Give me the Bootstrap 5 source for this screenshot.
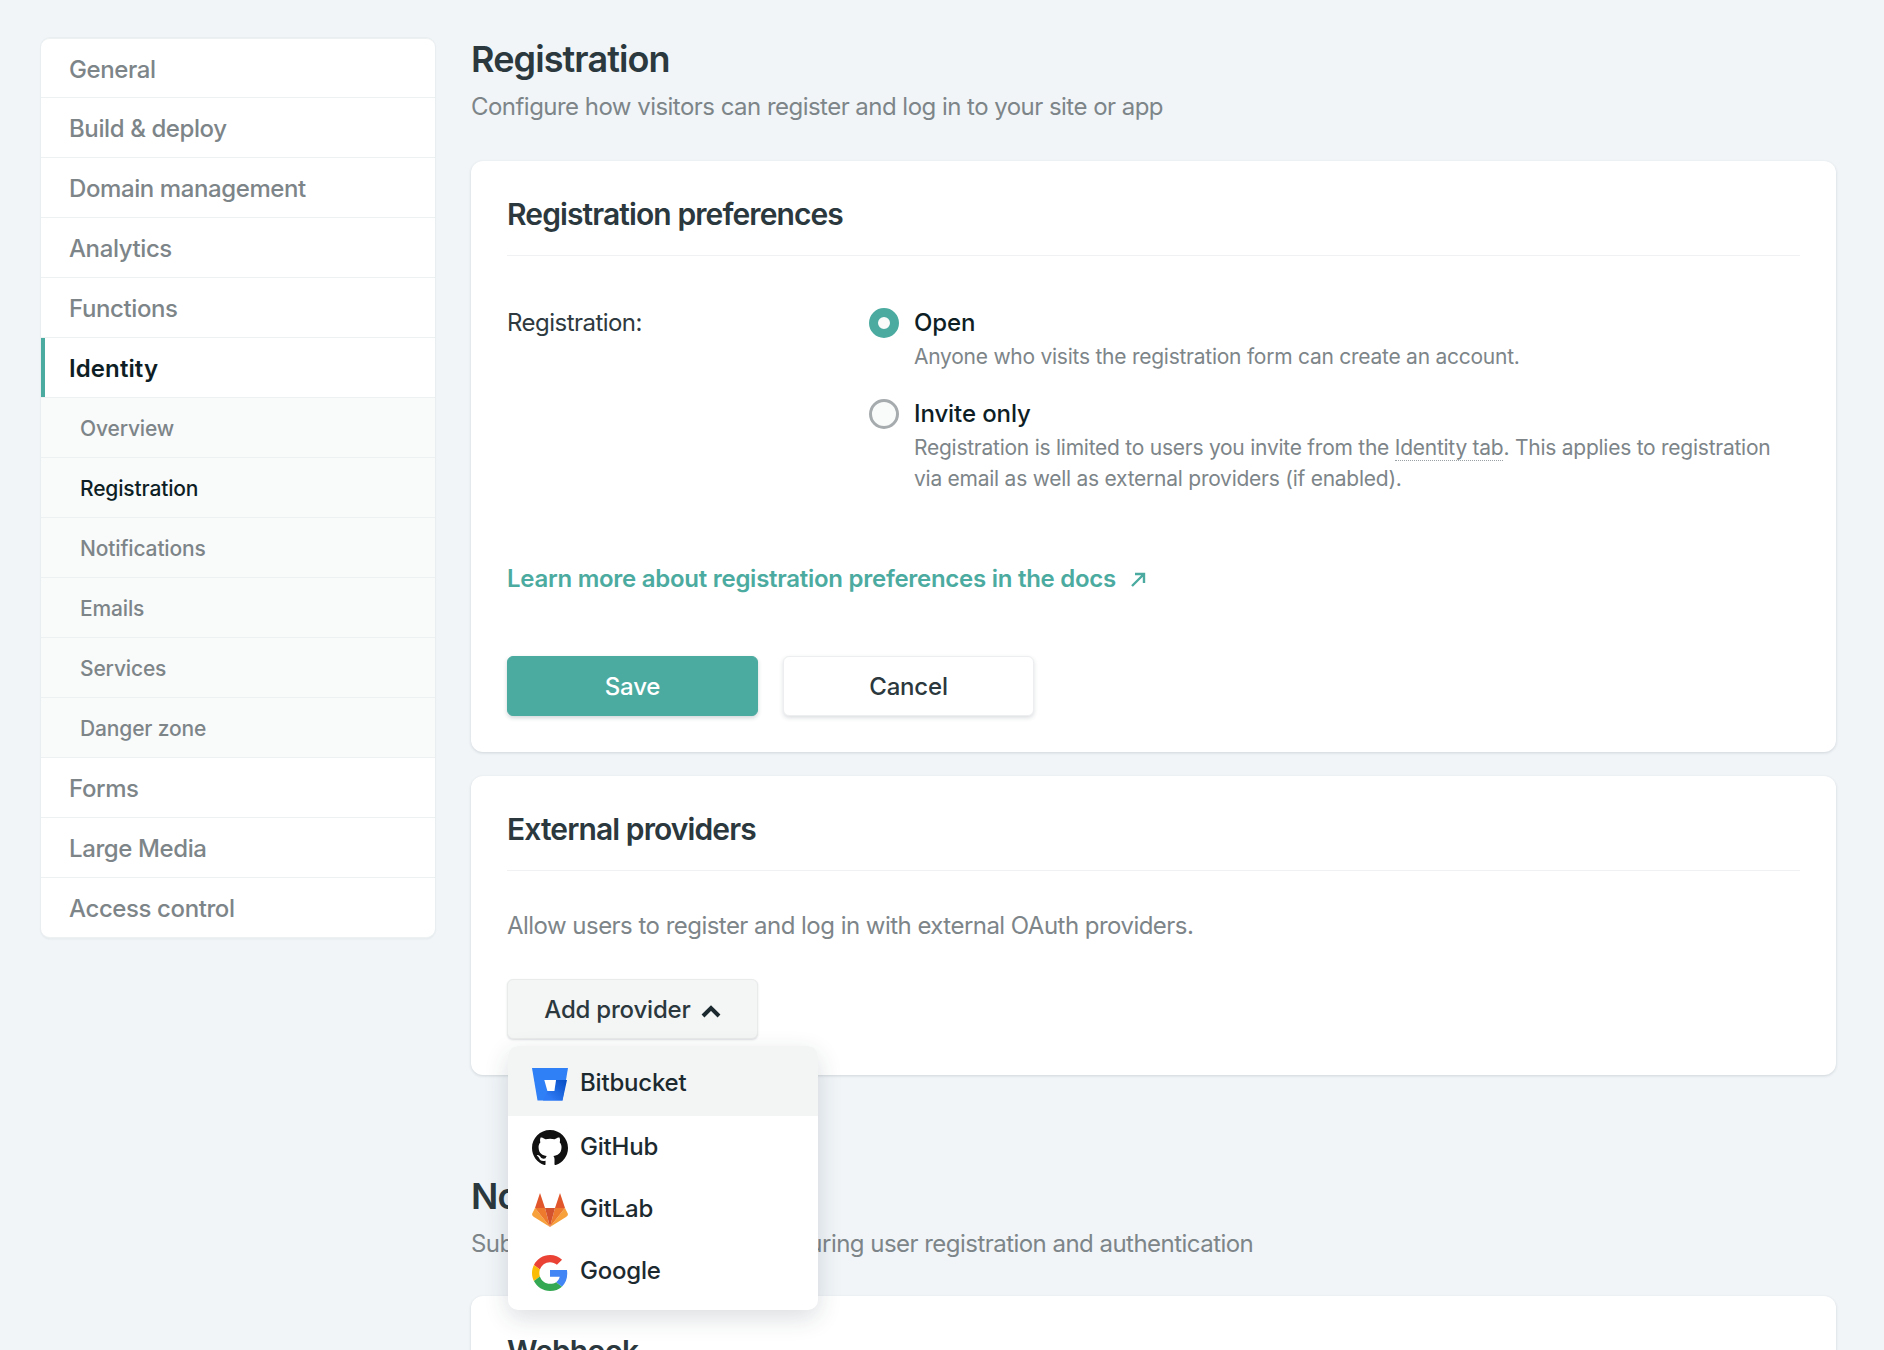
<!DOCTYPE html>
<html lang="en">

<head>
    <meta charset="UTF-8">
    <meta name="viewport" content="width=device-width, initial-scale=1.0">
    <title>Registration</title>
    <link href="https://cdn.jsdelivr.net/npm/bootstrap@5.3.3/dist/css/bootstrap.min.css" rel="stylesheet">
    <style>
        html,
        body {
            height: 1350px;
            overflow: hidden;
        }

        body {
            background-color: #f1f5f8;
            color: #2e3a3f;
            font-family: Inter, "Liberation Sans", sans-serif;
            font-size: 24px;
            letter-spacing: -.53px;
        }

        .page-wrap {
            display: flex;
            gap: 36px;
            padding: 38px 48px 0 41px;
        }

        /* sidebar */
        .side-col {
            width: 394px;
            flex-shrink: 0;
        }

        .side-nav {
            --bs-list-group-border-color: #eef1f2;
            border-radius: 9px;
            box-shadow: 0 0 0 1px #e9eef1, 0 1px 2px rgba(30, 50, 60, .1);
        }

        .side-nav .list-group-item {
            height: 60px;
            padding: 3px 0 0 28px;
            display: flex;
            align-items: center;
            color: #7d8589;
            font-weight: 500;
            font-size: 24px;
            letter-spacing: -.4px;
            border-left: 0;
            border-right: 0;
        }

        .side-nav .list-group-item.side-active {
            color: #0e1e25;
            font-weight: 600;
            letter-spacing: .1px;
            box-shadow: inset 4px 0 0 #4caba0;
        }

        .side-nav .list-group-item.side-sub {
            background-color: #f9fafa;
            padding-left: 39px;
            font-size: 21px;
            letter-spacing: -.15px;
        }

        .side-nav .list-group-item.side-current {
            color: #0e1e25;
        }

        /* main column */
        .main-col {
            flex: 1;
            min-width: 0;
            position: relative;
            margin-top: -1px;
        }

        .page-title {
            font-size: 36px;
            font-weight: 600;
            line-height: 44px;
            letter-spacing: -.9px;
            margin: 0 0 8px;
            color: #2b383d;
        }

        .page-sub {
            color: #7d8589;
            margin: 0 0 36px;
            line-height: 36px;
        }

        .section-title {
            margin-top: 99px;
        }

        .section-sub {
            margin-bottom: 34px;
        }

        .panel {
            border: 0;
            border-radius: 12px;
            box-shadow: 0 1px 3px rgba(30, 50, 60, .16);
            padding: 36px;
        }

        .panel-gap {
            margin-bottom: 24px;
        }

        .webhook-panel {
            padding-top: 38px;
        }

        .panel-title {
            font-size: 30px;
            font-weight: 600;
            line-height: 36px;
            letter-spacing: -.9px;
            margin: -1px 0 0;
            padding-bottom: 23px;
            border-bottom: 1px solid #eff1f2;
            color: #2b383d;
        }

        .reg-row {
            margin-top: 49px;
        }

        .reg-label {
            width: 362px;
            flex-shrink: 0;
            line-height: 36px;
        }

        .radio-dot {
            width: 30px;
            height: 30px;
            border-radius: 50%;
            flex-shrink: 0;
            margin: 3px 15px 0 0;
            background: #f9fafa;
            border: 3px solid #a6abae;
        }

        .radio-dot.radio-on {
            border: 9px solid #4caba0;
        }

        .radio-opt {
            margin-bottom: 23px;
        }

        .radio-name {
            color: #0e1e25;
            font-weight: 500;
            line-height: 36px;
            letter-spacing: -.1px;
        }

        .radio-help {
            color: #7d8589;
            font-size: 21px;
            line-height: 31.5px;
            letter-spacing: -.25px;
        }

        .dotted-link {
            color: inherit;
            text-decoration: none;
            border-bottom: 1px dotted #9aa1a5;
        }

        .docs-row {
            margin-top: 66px;
            line-height: 36px;
        }

        .docs-link {
            color: #4caba0;
            font-weight: 600;
            letter-spacing: -.27px;
            text-decoration: none;
        }

        .act-row {
            margin-top: 59px;
            gap: 25px;
        }

        .act-btn {
            width: 251px;
            height: 60px;
            padding-top: 8px;
            font-size: 24px;
            font-weight: 500;
            letter-spacing: -.2px;
            border-radius: 6px;
        }

        .btn-save {
            --bs-btn-bg: #4caba0;
            --bs-btn-color: #fff;
            --bs-btn-border-color: #4caba0;
            box-shadow: 0 2px 4px rgba(30, 50, 60, .2);
        }

        .btn-cancel {
            --bs-btn-bg: #fff;
            --bs-btn-color: #2b383d;
            --bs-btn-border-color: #eceeef;
            box-shadow: 0 2px 4px rgba(30, 50, 60, .16);
        }

        .btn-provider {
            --bs-btn-bg: #f4f5f5;
            --bs-btn-color: #2b383d;
            --bs-btn-border-color: #e9ebeb;
            box-shadow: 0 1px 2px rgba(30, 50, 60, .16);
        }

        .provider-copy {
            margin: 37px 0 35px;
        }

        /* provider menu */
        .provider-menu {
            display: block;
            left: 1px;
            top: calc(100% + 7px);
            width: 310px;
            padding: 0 0 8px;
            border: 0;
            border-radius: 10px;
            overflow: hidden;
            box-shadow: 0 8px 24px rgba(30, 50, 60, .16);
            z-index: 5;
        }

        .provider-menu .dropdown-item {
            display: flex;
            align-items: center;
            gap: 12px;
            height: 62.3px;
            padding: 0 0 0 24px;
            font-size: 24px;
            letter-spacing: -.2px;
            color: #1c2a30;
            font-weight: 500;
        }

        .provider-menu .dropdown-item:first-child {
            height: 70px;
            padding-top: 5px;
            background: #f3f5f5;
        }

        .provider-menu svg {
            width: 36px;
            height: 36px;
            flex-shrink: 0;
            margin-top: 3px;
        }
    </style>
</head>

<body>
    <div class="page-wrap">
        <div class="side-col">
            <div class="list-group side-nav">
                <a href="#" class="list-group-item">General</a>
                <a href="#" class="list-group-item">Build &amp; deploy</a>
                <a href="#" class="list-group-item">Domain management</a>
                <a href="#" class="list-group-item">Analytics</a>
                <a href="#" class="list-group-item">Functions</a>
                <a href="#" class="list-group-item side-active">Identity</a>
                <a href="#" class="list-group-item side-sub">Overview</a>
                <a href="#" class="list-group-item side-sub side-current">Registration</a>
                <a href="#" class="list-group-item side-sub">Notifications</a>
                <a href="#" class="list-group-item side-sub">Emails</a>
                <a href="#" class="list-group-item side-sub">Services</a>
                <a href="#" class="list-group-item side-sub">Danger zone</a>
                <a href="#" class="list-group-item">Forms</a>
                <a href="#" class="list-group-item">Large Media</a>
                <a href="#" class="list-group-item">Access control</a>
            </div>
        </div>

        <div class="main-col">
            <h1 class="page-title">Registration</h1>
            <p class="page-sub">Configure how visitors can register and log in to your site or app</p>

            <div class="card panel panel-gap">
                <h2 class="panel-title">Registration preferences</h2>
                <div class="d-flex reg-row">
                    <div class="reg-label">Registration:</div>
                    <div>
                        <div class="d-flex radio-opt">
                            <span class="radio-dot radio-on"></span>
                            <div>
                                <div class="radio-name">Open</div>
                                <div class="radio-help">Anyone who visits the registration form can create an account.</div>
                            </div>
                        </div>
                        <div class="d-flex">
                            <span class="radio-dot"></span>
                            <div>
                                <div class="radio-name">Invite only</div>
                                <div class="radio-help">Registration is limited to users you invite from the <a href="#" class="dotted-link">Identity tab</a>. This applies to registration via email as well as external providers (if enabled).</div>
                            </div>
                        </div>
                    </div>
                </div>
                <div class="docs-row">
                    <a href="#" class="docs-link">Learn more about registration preferences in the docs
                        <svg class="ms-2" width="16" height="16" viewBox="0 0 16 16" fill="none" stroke="#4caba0" stroke-width="2.4">
                            <path d="M2 14 14 2M5 2h9v9" />
                        </svg>
                    </a>
                </div>
                <div class="d-flex act-row">
                    <button type="button" class="btn btn-save act-btn">Save</button>
                    <button type="button" class="btn btn-cancel act-btn">Cancel</button>
                </div>
            </div>

            <div class="card panel">
                <h2 class="panel-title">External providers</h2>
                <p class="page-sub provider-copy">Allow users to register and log in with external OAuth providers.</p>
                <div class="position-relative">
                    <button type="button" class="btn btn-provider act-btn">Add provider
                        <svg class="ms-1" width="20" height="14" viewBox="0 0 20 14" fill="none" stroke="#1c2a30" stroke-width="4">
                            <path d="M2 12 10 4l8 8" />
                        </svg>
                    </button>
                    <div class="dropdown-menu provider-menu">
                        <a href="#" class="dropdown-item">
                            <svg viewBox="0 0 36 36">
                                <defs>
                                    <linearGradient id="bb" x1="1" y1="0.2" x2="0.3" y2="0.9">
                                        <stop offset="0" stop-color="#0a52c8" />
                                        <stop offset="1" stop-color="#2f7bf5" />
                                    </linearGradient>
                                </defs>
                                <path fill="#2f7ff7" d="M0 1h36l-5.500 32.500H5.500z" />
                                <path fill="url(#bb)" d="M35 13H24l-1.600 11h-7L11 33.500h19.500z" />
                                <path fill="#fff" d="M12.300 13H24l-1.600 11h-7z" />
                            </svg>
                            Bitbucket
                        </a>
                        <a href="#" class="dropdown-item">
                            <svg viewBox="0 0 16 16" fill="#111">
                                <path d="M8 0C3.580 0 0 3.580 0 8c0 3.540 2.290 6.530 5.470 7.590.4.070.55-.17.55-.38 0-.19-.01-.82-.01-1.490-2.010.37-2.530-.49-2.690-.94-.09-.23-.48-.94-.82-1.130-.28-.15-.68-.52-.01-.53.63-.01 1.080.58 1.230.82.72 1.210 1.870.87 2.330.66.07-.52.28-.87.51-1.070-1.780-.2-3.640-.89-3.640-3.950 0-.87.31-1.590.82-2.150-.08-.2-.36-1.020.08-2.120 0 0 .67-.21 2.200.82.64-.18 1.320-.27 2-.27.68 0 1.360.09 2 .27 1.530-1.040 2.200-.82 2.200-.82.44 1.100.16 1.920.08 2.120.51.56.82 1.270.82 2.150 0 3.070-1.870 3.750-3.650 3.950.29.25.54.73.54 1.480 0 1.070-.01 1.930-.01 2.200 0 .21.15.46.55.38A8.013 8.013 0 0016 8c0-4.420-3.580-8-8-8z" />
                            </svg>
                            GitHub
                        </a>
                        <a href="#" class="dropdown-item">
                            <svg viewBox="0 0 36 36">
                                <path fill="#e1572b" d="M8 1 3 16h10z" />
                                <path fill="#e1572b" d="M28 1l5 15H23z" />
                                <path fill="#f6a13b" d="M3 16 0 22q0 2 2 3l16 10z" />
                                <path fill="#f6a13b" d="M33 16l3 6q0 2-2 3L18 35z" />
                                <path fill="#ee7a2d" d="M3 16h10l5 19z" />
                                <path fill="#ee7a2d" d="M33 16H23l-5 19z" />
                                <path fill="#d3532f" d="M13 16h10l-5 19z" />
                            </svg>
                            GitLab
                        </a>
                        <a href="#" class="dropdown-item">
                            <svg viewBox="0 0 48 48">
                                <path fill="#EA4335" d="M24 9.500c3.540 0 6.710 1.220 9.210 3.600l6.850-6.850C35.900 2.380 30.470 0 24 0 14.620 0 6.510 5.380 2.560 13.220l7.980 6.190C12.430 13.720 17.740 9.500 24 9.500z" />
                                <path fill="#4285F4" d="M46.980 24.550c0-1.570-.15-3.090-.38-4.550H24v9.020h12.940c-.58 2.960-2.260 5.480-4.780 7.180l7.730 6c4.510-4.180 7.090-10.360 7.090-17.650z" />
                                <path fill="#FBBC05" d="M10.530 28.590c-.48-1.450-.76-2.990-.76-4.590s.27-3.140.76-4.590l-7.980-6.190C.92 16.460 0 20.120 0 24c0 3.880.92 7.540 2.560 10.780l7.970-6.190z" />
                                <path fill="#34A853" d="M24 48c6.480 0 11.930-2.130 15.890-5.810l-7.730-6c-2.150 1.450-4.920 2.300-8.160 2.300-6.260 0-11.570-4.220-13.470-9.910l-7.980 6.190C6.510 42.620 14.620 48 24 48z" />
                            </svg>
                            Google
                        </a>
                    </div>
                </div>
            </div>

            <h1 class="page-title section-title">Notifications</h1>
            <p class="page-sub section-sub">Subscribe to identity updates during user registration and authentication</p>
            <div class="card panel webhook-panel">
                <h2 class="panel-title">Webhook</h2>
            </div>
        </div>
    </div>

    <script src="https://cdn.jsdelivr.net/npm/bootstrap@5.3.3/dist/js/bootstrap.bundle.min.js"></script>
</body>

</html>
